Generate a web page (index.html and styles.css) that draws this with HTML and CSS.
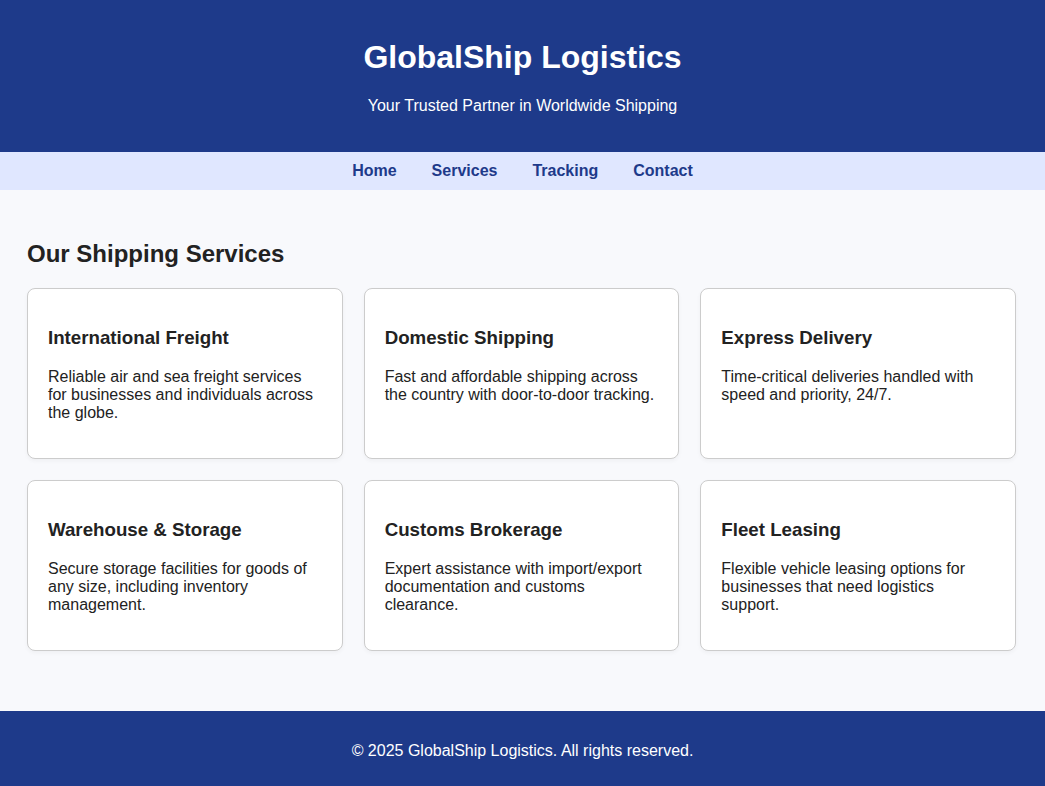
FILE: index.html
```html
<!DOCTYPE html>
<html lang="en">
<head>
<meta charset="UTF-8">
<meta name="viewport" content="width=device-width, initial-scale=1.0">
<title>GlobalShip Logistics</title>
<link rel="stylesheet" href="styles.css">
</head>
<body>
<header class="site-header">
  <h1>GlobalShip Logistics</h1>
  <p>Your Trusted Partner in Worldwide Shipping</p>
</header>
<nav class="site-nav">
  <a href="#">Home</a>
  <a href="#">Services</a>
  <a href="#">Tracking</a>
  <a href="#">Contact</a>
</nav>
<main class="content">
  <h2>Our Shipping Services</h2>
  <div class="services">
    <div class="card">
      <h3>International Freight</h3>
      <p>Reliable air and sea freight services for businesses and individuals across the globe.</p>
    </div>
    <div class="card">
      <h3>Domestic Shipping</h3>
      <p>Fast and affordable shipping across the country with door-to-door tracking.</p>
    </div>
    <div class="card">
      <h3>Express Delivery</h3>
      <p>Time-critical deliveries handled with speed and priority, 24/7.</p>
    </div>
    <div class="card">
      <h3>Warehouse &amp; Storage</h3>
      <p>Secure storage facilities for goods of any size, including inventory management.</p>
    </div>
    <div class="card">
      <h3>Customs Brokerage</h3>
      <p>Expert assistance with import/export documentation and customs clearance.</p>
    </div>
    <div class="card">
      <h3>Fleet Leasing</h3>
      <p>Flexible vehicle leasing options for businesses that need logistics support.</p>
    </div>
  </div>
</main>
<footer class="site-footer">
  <p>&copy; 2025 GlobalShip Logistics. All rights reserved.</p>
</footer>
</body>
</html>
```

FILE: styles.css
```css
body {
  margin: 0;
  font-family: "Liberation Sans", Arial, sans-serif;
  background-color: #f8f9fc;
  color: #222;
}

.site-header {
  background-color: #1e3a8a;
  color: #fff;
  text-align: center;
  padding: 18px 20px;
}

.site-header h1 {
  font-size: 32px;
  margin: 21px 0 21px;
}

.site-header p {
  margin: 0 0 19px;
}

.site-nav {
  background-color: #e0e7ff;
  display: flex;
  justify-content: center;
  gap: 35px;
  padding: 10px 0;
}

.site-nav a {
  color: #1e3a8a;
  font-weight: bold;
  text-decoration: none;
}

.content {
  padding: 30px 29px 60px 27px;
}

.content h2 {
  font-size: 24px;
  margin: 20px 0;
}

.services {
  display: grid;
  grid-template-columns: repeat(3, 1fr);
  gap: 21px;
}

.card {
  background-color: #fff;
  border: 1px solid #ccc;
  border-radius: 8px;
  padding: 20px;
  box-shadow: 0 2px 4px rgba(0, 0, 0, 0.04);
}

.card h3 {
  font-size: 1.17em;
  margin: 18px 0 19px;
}

.card p {
  margin: 0 0 16px;
}

.site-footer {
  background-color: #1e3a8a;
  color: #fff;
  text-align: center;
  padding: 15px 20px;
}
```
